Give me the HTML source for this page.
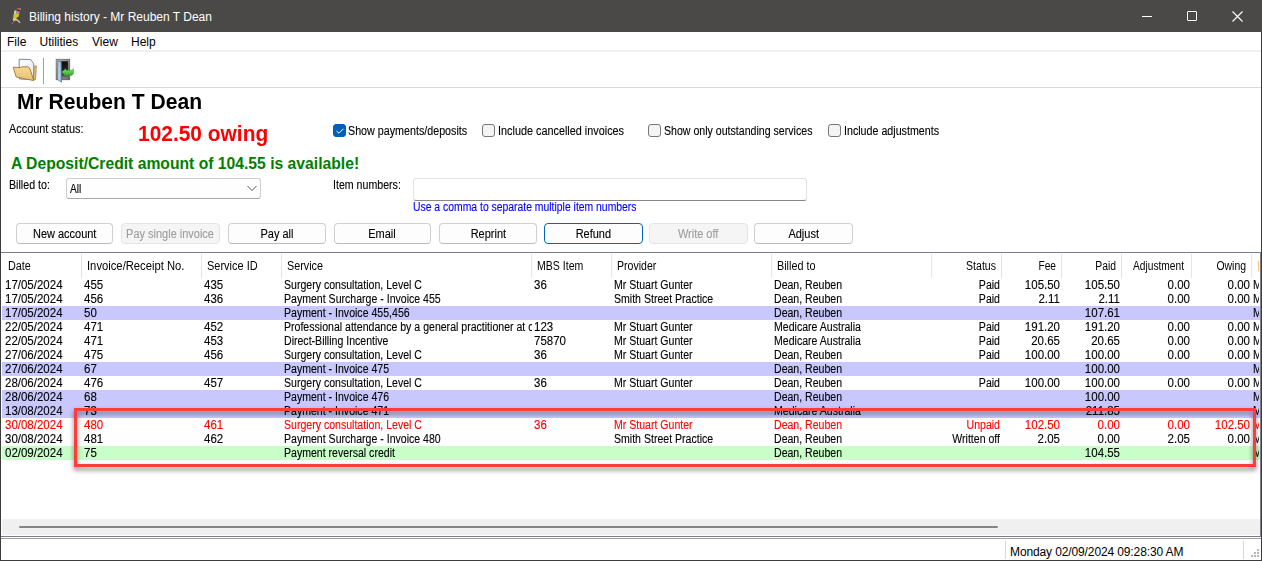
<!DOCTYPE html>
<html><head><meta charset="utf-8">
<style>
*{box-sizing:border-box;margin:0;padding:0}
html,body{width:1262px;height:561px;overflow:hidden;background:#fff;font-family:"Liberation Sans",sans-serif;color:#000}
.a{position:absolute;white-space:nowrap}
#win{position:absolute;left:0;top:0;width:1262px;height:561px;background:#fff;border-left:1px solid #3d3d3d;border-right:1px solid #3d3d3d;border-bottom:1px solid #3d3d3d}
#title{position:absolute;left:0;top:0;width:1262px;height:32px;background:#4b4947}
.t12{font-size:12px;line-height:12px}
.t11{font-size:11px;line-height:11px}
.btn{position:absolute;height:21px;border:1px solid #d0d0d0;border-bottom-color:#bdbdbd;border-radius:4px;background:#fdfdfd;font-size:12px;line-height:20px;text-align:center;white-space:nowrap}
.btn span{display:inline-block;transform:scaleX(0.915);-webkit-text-stroke:0.12px currentColor}
.ms{font-size:12px;line-height:12px;transform-origin:0 0;-webkit-text-stroke:0.12px currentColor}
.btn.dis{background:#f5f5f5;border-color:#e5e5e5;color:#9d9d9d}
.btn.def{border:1.5px solid #0067c0;line-height:20.5px}
.cb{position:absolute;top:124px;width:13px;height:13px;border:1px solid #777;border-radius:3px;background:#f4f4f4}
.cb.on{background:#005fb8;border-color:#005fb8}
.hsep{position:absolute;top:254px;width:1px;height:24px;background:#e5e5e5}
.row{position:absolute;left:2px;width:1258px;height:14px}
.c{position:absolute;font-size:11px;line-height:11px;white-space:nowrap;}
.r{text-align:right}
</style></head><body>
<div id="win">
</div>
<div id="title">
  <!-- bird icon -->
  <svg class="a" style="left:8px;top:5px;filter:blur(0.35px)" width="18" height="22" viewBox="0 0 18 22">
    <path d="M6.2 6 C6.8 5.2 7.8 5 8.3 5.6 L8.4 9 L6.6 10.6 L5.9 8.8 Z" fill="#c5d2b5"/>
    <path d="M8.2 5.8 L11.6 6.2 L11.4 8.5 L8.4 8.7 Z" fill="#a98ac6"/>
    <path d="M5.4 9.6 L8.4 8.5 L11.2 8.5 L10.6 11.4 L7.8 13.4 L5.2 13.4 Z" fill="#d8c01e"/>
    <path d="M5.2 13 L7.8 13.1 L10.8 15.6 L12.6 17.6 L11.8 18.2 L8.6 15.6 L6.6 15.8 L4.6 18.2 L3.6 18.4 Z" fill="#d3c69a"/>
    <path d="M4.3 15.6 L5.6 15.4 L5.1 17.3 L3.9 17.8 Z" fill="#1a1412"/>
    <ellipse cx="10.4" cy="4.1" rx="1.6" ry="1.35" fill="#e4461e"/>
    <rect x="9.7" y="5.1" width="1.4" height="1" fill="#1a1010"/>
    <rect x="12" y="3.6" width="1" height="0.9" fill="#dcdcd0"/>
  </svg>
  <div class="a t12" style="left:29px;top:10.8px;color:#fff">Billing history - Mr Reuben T Dean</div>
  <div class="a" style="left:1142px;top:16px;width:10px;height:1px;background:#fff"></div>
  <div class="a" style="left:1187px;top:11px;width:10px;height:10px;border:1px solid #fff;border-radius:1px"></div>
  <svg class="a" style="left:1232px;top:11px" width="11" height="11" viewBox="0 0 11 11"><path d="M0.5 0.5 L10.5 10.5 M10.5 0.5 L0.5 10.5" stroke="#fff" stroke-width="1.1"/></svg>
</div>
<!-- menu -->
<div class="a t12" style="left:7px;top:35.8px">File</div>
<div class="a t12" style="left:39.5px;top:35.8px">Utilities</div>
<div class="a t12" style="left:92px;top:35.8px">View</div>
<div class="a t12" style="left:131px;top:35.8px">Help</div>
<div class="a" style="left:1px;top:50px;width:1260px;height:2px;background:#f0f0f0"></div>
<!-- toolbar icons -->
<svg class="a" style="left:12px;top:58px" width="26" height="26" viewBox="0 0 26 26">
  <defs>
    <linearGradient id="fg" x1="0" y1="0" x2="0" y2="1"><stop offset="0" stop-color="#f6d894"/><stop offset="1" stop-color="#e9c170"/></linearGradient>
    <linearGradient id="pg" x1="0" y1="0" x2="1" y2="1"><stop offset="0" stop-color="#ffffff"/><stop offset="1" stop-color="#e2e9f0"/></linearGradient>
  </defs>
  <path d="M21.8 8.2 L24.4 7.9 L23.6 21.5 L21.5 21.8 Z" fill="#e6c070" stroke="#9b7535" stroke-width="0.7"/>
  <path d="M7.1 1.3 L18.6 1.5 L21.8 5.8 L21.6 21.5 L7.5 21 Z" fill="url(#pg)" stroke="#6d7d8c" stroke-width="0.9"/>
  <path d="M1.2 9.2 L8.5 9.6 L10 8.8 L15.6 8.8 Q17.2 9 18 11 L21.8 22.6 L4.2 19 Z" fill="url(#fg)" stroke="#9b7535" stroke-width="0.9" stroke-linejoin="round"/>
</svg>
<svg class="a" style="left:55px;top:58px" width="20" height="26" viewBox="0 0 20 26">
  <defs>
    <linearGradient id="dg" x1="0" y1="0" x2="1" y2="1"><stop offset="0" stop-color="#b8b8b8"/><stop offset="1" stop-color="#5a5a5a"/></linearGradient>
    <linearGradient id="og" x1="0" y1="0" x2="0" y2="1"><stop offset="0" stop-color="#0c0c0c"/><stop offset="0.7" stop-color="#2a2a2a"/><stop offset="1" stop-color="#8a8a8a"/></linearGradient>
    <linearGradient id="bg2" x1="0" y1="0" x2="1" y2="0"><stop offset="0" stop-color="#d4e6f4"/><stop offset="1" stop-color="#8fb4d6"/></linearGradient>
    <linearGradient id="ag" x1="0" y1="0" x2="0" y2="1"><stop offset="0" stop-color="#7ee86a"/><stop offset="1" stop-color="#22a01e"/></linearGradient>
  </defs>
  <rect x="1.1" y="1.2" width="13.7" height="20.6" fill="url(#dg)" stroke="#555" stroke-width="0.6"/>
  <rect x="6.2" y="3.3" width="6.7" height="17.2" fill="url(#og)"/>
  <path d="M3 2.8 L6.2 4 L6.5 24.2 L2.5 21.5 Z" fill="url(#bg2)" stroke="#4a6a8a" stroke-width="0.7"/>
  <path d="M6.5 14 L11 10.6 L11 12.3 L15.5 12.2 C17.3 12 18.2 11.2 18.5 10.4 L18.6 15 C18.2 16.8 16.8 17.6 15 17.6 L11 17.6 L11 18.8 Z" fill="url(#ag)" stroke="#2a8a25" stroke-width="0.4"/>
</svg>
<!-- toolbar -->
<div class="a" style="left:43px;top:58px;width:1px;height:26px;background:#a0a0a0"></div>
<div class="a" style="left:1px;top:87px;width:1260px;height:1px;background:#d9d9d9"></div>
<!-- heading -->
<div class="a" style="left:17px;top:91.4px;font-size:22px;line-height:22px;font-weight:bold;transform:scaleX(0.958);transform-origin:0 0">Mr Reuben T Dean</div>
<div class="a ms" style="left:9px;top:122.84px;transform:scaleX(0.907)">Account status:</div>
<div class="a" style="left:138px;top:123.8px;font-size:21.5px;line-height:21.5px;font-weight:bold;color:#ff0000;transform:scaleX(0.973);transform-origin:0 0">102.50 owing</div>
<div class="a" style="left:11px;top:155.7px;font-size:15.7px;line-height:15.7px;font-weight:bold;color:#008000">A Deposit/Credit amount of 104.55 is available!</div>
<!-- checkboxes -->
<div class="cb on" style="left:333px"><svg style="position:absolute;left:2px;top:3px" width="8" height="6" viewBox="0 0 8 6"><path d="M0.5 3 L3 5.2 L7.5 0.7" stroke="#fff" stroke-width="1" fill="none"/></svg></div>
<div class="a ms" style="left:348.3px;top:124.84px;transform:scaleX(0.893)">Show payments/deposits</div>
<div class="cb" style="left:482px"></div>
<div class="a ms" style="left:497.5px;top:124.84px;transform:scaleX(0.904)">Include cancelled invoices</div>
<div class="cb" style="left:648px"></div>
<div class="a ms" style="left:663.6px;top:124.84px;transform:scaleX(0.883)">Show only outstanding services</div>
<div class="cb" style="left:828px"></div>
<div class="a ms" style="left:844.2px;top:124.84px;transform:scaleX(0.89)">Include adjustments</div>
<!-- billed to -->
<div class="a ms" style="left:8.7px;top:179.1px;transform:scaleX(0.889)">Billed to:</div>
<div class="a" style="left:66px;top:178px;width:195px;height:21px;border:1px solid #cfcfcf;border-bottom-color:#a8a8a8;border-radius:3px;background:#fefefe"></div>
<div class="a ms" style="left:70.2px;top:182.9px;transform:scaleX(0.85)">All</div>
<svg class="a" style="left:247px;top:185px" width="10" height="7" viewBox="0 0 10 7"><path d="M0.5 1 L5 5.5 L9.5 1" stroke="#555" stroke-width="1" fill="none"/></svg>
<div class="a ms" style="left:332.6px;top:179.3px;transform:scaleX(0.885)">Item numbers:</div>
<div class="a" style="left:413px;top:178px;width:394px;height:23px;border:1px solid #e3e3e3;border-bottom:1px solid #868686;border-radius:3px;background:#fff"></div>
<div class="a ms" style="left:412.8px;top:200.8px;color:#0000ff;transform:scaleX(0.866)">Use a comma to separate multiple item numbers</div>
<!-- buttons -->
<div class="btn" style="left:16px;top:223px;width:97px"><span>New account</span></div>
<div class="btn dis" style="left:121px;top:223px;width:99px"><span>Pay single invoice</span></div>
<div class="btn" style="left:228px;top:223px;width:98px"><span>Pay all</span></div>
<div class="btn" style="left:334px;top:223px;width:97px"><span>Email</span></div>
<div class="btn" style="left:439px;top:223px;width:98px"><span>Reprint</span></div>
<div class="btn def" style="left:544px;top:223px;width:99px"><span>Refund</span></div>
<div class="btn dis" style="left:649px;top:223px;width:99px"><span>Write off</span></div>
<div class="btn" style="left:754px;top:223px;width:99px"><span>Adjust</span></div>
<!-- grid -->
<div class="a" style="left:1px;top:252px;width:1260px;height:285px;border-top:1px solid #7a7f8a;border-right:1px solid #7a7f8a;border-bottom:1px solid #7a7f8a"></div>
<div id="grid">
<div class="c" style="top:278.84px;font-size:12px;line-height:12px;-webkit-text-stroke:0.12px currentColor;left:4.8px;transform:scaleX(0.958);transform-origin:0 0;">17/05/2024</div>
<div class="c" style="top:278.84px;font-size:12px;line-height:12px;-webkit-text-stroke:0.12px currentColor;left:84px;transform:scaleX(0.958);transform-origin:0 0;">455</div>
<div class="c" style="top:278.84px;font-size:12px;line-height:12px;-webkit-text-stroke:0.12px currentColor;left:204px;transform:scaleX(0.958);transform-origin:0 0;">435</div>
<div class="a" style="left:0;top:0;width:532px;height:561px;overflow:hidden"><div class="c" style="top:278.84px;font-size:12px;line-height:12px;-webkit-text-stroke:0.12px currentColor;left:284px;transform:scaleX(0.88);transform-origin:0 0;">Surgery consultation, Level C</div></div>
<div class="c" style="top:278.84px;font-size:12px;line-height:12px;-webkit-text-stroke:0.12px currentColor;left:534px;transform:scaleX(0.958);transform-origin:0 0;">36</div>
<div class="c" style="top:278.84px;font-size:12px;line-height:12px;-webkit-text-stroke:0.12px currentColor;left:614px;transform:scaleX(0.88);transform-origin:0 0;">Mr Stuart Gunter</div>
<div class="c" style="top:278.84px;font-size:12px;line-height:12px;-webkit-text-stroke:0.12px currentColor;left:774px;transform:scaleX(0.88);transform-origin:0 0;">Dean, Reuben</div>
<div class="c" style="top:278.84px;font-size:12px;line-height:12px;-webkit-text-stroke:0.12px currentColor;left:700px;width:300px;text-align:right;transform:scaleX(0.88);transform-origin:100% 0;">Paid</div>
<div class="c" style="top:278.84px;font-size:12px;line-height:12px;-webkit-text-stroke:0.12px currentColor;left:760px;width:300px;text-align:right;transform:scaleX(0.958);transform-origin:100% 0;">105.50</div>
<div class="c" style="top:278.84px;font-size:12px;line-height:12px;-webkit-text-stroke:0.12px currentColor;left:820px;width:300px;text-align:right;transform:scaleX(0.958);transform-origin:100% 0;">105.50</div>
<div class="c" style="top:278.84px;font-size:12px;line-height:12px;-webkit-text-stroke:0.12px currentColor;left:890px;width:300px;text-align:right;transform:scaleX(0.958);transform-origin:100% 0;">0.00</div>
<div class="c" style="top:278.84px;font-size:12px;line-height:12px;-webkit-text-stroke:0.12px currentColor;left:950px;width:300px;text-align:right;transform:scaleX(0.958);transform-origin:100% 0;">0.00</div>
<div class="a" style="left:0;top:0;width:1259px;height:561px;overflow:hidden"><div class="c" style="top:278.84px;font-size:12px;line-height:12px;-webkit-text-stroke:0.12px currentColor;left:1253px;transform:scaleX(0.88);transform-origin:0 0;">M</div></div>
<div class="c" style="top:292.84px;font-size:12px;line-height:12px;-webkit-text-stroke:0.12px currentColor;left:4.8px;transform:scaleX(0.958);transform-origin:0 0;">17/05/2024</div>
<div class="c" style="top:292.84px;font-size:12px;line-height:12px;-webkit-text-stroke:0.12px currentColor;left:84px;transform:scaleX(0.958);transform-origin:0 0;">456</div>
<div class="c" style="top:292.84px;font-size:12px;line-height:12px;-webkit-text-stroke:0.12px currentColor;left:204px;transform:scaleX(0.958);transform-origin:0 0;">436</div>
<div class="a" style="left:0;top:0;width:532px;height:561px;overflow:hidden"><div class="c" style="top:292.84px;font-size:12px;line-height:12px;-webkit-text-stroke:0.12px currentColor;left:284px;transform:scaleX(0.88);transform-origin:0 0;">Payment Surcharge - Invoice 455</div></div>
<div class="c" style="top:292.84px;font-size:12px;line-height:12px;-webkit-text-stroke:0.12px currentColor;left:614px;transform:scaleX(0.88);transform-origin:0 0;">Smith Street Practice</div>
<div class="c" style="top:292.84px;font-size:12px;line-height:12px;-webkit-text-stroke:0.12px currentColor;left:774px;transform:scaleX(0.88);transform-origin:0 0;">Dean, Reuben</div>
<div class="c" style="top:292.84px;font-size:12px;line-height:12px;-webkit-text-stroke:0.12px currentColor;left:700px;width:300px;text-align:right;transform:scaleX(0.88);transform-origin:100% 0;">Paid</div>
<div class="c" style="top:292.84px;font-size:12px;line-height:12px;-webkit-text-stroke:0.12px currentColor;left:760px;width:300px;text-align:right;transform:scaleX(0.958);transform-origin:100% 0;">2.11</div>
<div class="c" style="top:292.84px;font-size:12px;line-height:12px;-webkit-text-stroke:0.12px currentColor;left:820px;width:300px;text-align:right;transform:scaleX(0.958);transform-origin:100% 0;">2.11</div>
<div class="c" style="top:292.84px;font-size:12px;line-height:12px;-webkit-text-stroke:0.12px currentColor;left:890px;width:300px;text-align:right;transform:scaleX(0.958);transform-origin:100% 0;">0.00</div>
<div class="c" style="top:292.84px;font-size:12px;line-height:12px;-webkit-text-stroke:0.12px currentColor;left:950px;width:300px;text-align:right;transform:scaleX(0.958);transform-origin:100% 0;">0.00</div>
<div class="a" style="left:0;top:0;width:1259px;height:561px;overflow:hidden"><div class="c" style="top:292.84px;font-size:12px;line-height:12px;-webkit-text-stroke:0.12px currentColor;left:1253px;transform:scaleX(0.88);transform-origin:0 0;">M</div></div>
<div class="a" style="left:2px;top:306px;width:1258px;height:14px;background:#c8c8ff"></div>
<div class="c" style="top:306.84px;font-size:12px;line-height:12px;-webkit-text-stroke:0.12px currentColor;left:4.8px;transform:scaleX(0.958);transform-origin:0 0;">17/05/2024</div>
<div class="c" style="top:306.84px;font-size:12px;line-height:12px;-webkit-text-stroke:0.12px currentColor;left:84px;transform:scaleX(0.958);transform-origin:0 0;">50</div>
<div class="a" style="left:0;top:0;width:532px;height:561px;overflow:hidden"><div class="c" style="top:306.84px;font-size:12px;line-height:12px;-webkit-text-stroke:0.12px currentColor;left:284px;transform:scaleX(0.88);transform-origin:0 0;">Payment - Invoice 455,456</div></div>
<div class="c" style="top:306.84px;font-size:12px;line-height:12px;-webkit-text-stroke:0.12px currentColor;left:774px;transform:scaleX(0.88);transform-origin:0 0;">Dean, Reuben</div>
<div class="c" style="top:306.84px;font-size:12px;line-height:12px;-webkit-text-stroke:0.12px currentColor;left:820px;width:300px;text-align:right;transform:scaleX(0.958);transform-origin:100% 0;">107.61</div>
<div class="a" style="left:0;top:0;width:1259px;height:561px;overflow:hidden"><div class="c" style="top:306.84px;font-size:12px;line-height:12px;-webkit-text-stroke:0.12px currentColor;left:1253px;transform:scaleX(0.88);transform-origin:0 0;">M</div></div>
<div class="c" style="top:320.84px;font-size:12px;line-height:12px;-webkit-text-stroke:0.12px currentColor;left:4.8px;transform:scaleX(0.958);transform-origin:0 0;">22/05/2024</div>
<div class="c" style="top:320.84px;font-size:12px;line-height:12px;-webkit-text-stroke:0.12px currentColor;left:84px;transform:scaleX(0.958);transform-origin:0 0;">471</div>
<div class="c" style="top:320.84px;font-size:12px;line-height:12px;-webkit-text-stroke:0.12px currentColor;left:204px;transform:scaleX(0.958);transform-origin:0 0;">452</div>
<div class="a" style="left:0;top:0;width:532px;height:561px;overflow:hidden"><div class="c" style="top:320.84px;font-size:12px;line-height:12px;-webkit-text-stroke:0.12px currentColor;left:284px;transform:scaleX(0.88);transform-origin:0 0;">Professional attendance by a general practitioner at consulting rooms</div></div>
<div class="c" style="top:320.84px;font-size:12px;line-height:12px;-webkit-text-stroke:0.12px currentColor;left:534px;transform:scaleX(0.958);transform-origin:0 0;">123</div>
<div class="c" style="top:320.84px;font-size:12px;line-height:12px;-webkit-text-stroke:0.12px currentColor;left:614px;transform:scaleX(0.88);transform-origin:0 0;">Mr Stuart Gunter</div>
<div class="c" style="top:320.84px;font-size:12px;line-height:12px;-webkit-text-stroke:0.12px currentColor;left:774px;transform:scaleX(0.88);transform-origin:0 0;">Medicare Australia</div>
<div class="c" style="top:320.84px;font-size:12px;line-height:12px;-webkit-text-stroke:0.12px currentColor;left:700px;width:300px;text-align:right;transform:scaleX(0.88);transform-origin:100% 0;">Paid</div>
<div class="c" style="top:320.84px;font-size:12px;line-height:12px;-webkit-text-stroke:0.12px currentColor;left:760px;width:300px;text-align:right;transform:scaleX(0.958);transform-origin:100% 0;">191.20</div>
<div class="c" style="top:320.84px;font-size:12px;line-height:12px;-webkit-text-stroke:0.12px currentColor;left:820px;width:300px;text-align:right;transform:scaleX(0.958);transform-origin:100% 0;">191.20</div>
<div class="c" style="top:320.84px;font-size:12px;line-height:12px;-webkit-text-stroke:0.12px currentColor;left:890px;width:300px;text-align:right;transform:scaleX(0.958);transform-origin:100% 0;">0.00</div>
<div class="c" style="top:320.84px;font-size:12px;line-height:12px;-webkit-text-stroke:0.12px currentColor;left:950px;width:300px;text-align:right;transform:scaleX(0.958);transform-origin:100% 0;">0.00</div>
<div class="a" style="left:0;top:0;width:1259px;height:561px;overflow:hidden"><div class="c" style="top:320.84px;font-size:12px;line-height:12px;-webkit-text-stroke:0.12px currentColor;left:1253px;transform:scaleX(0.88);transform-origin:0 0;">M</div></div>
<div class="c" style="top:334.84px;font-size:12px;line-height:12px;-webkit-text-stroke:0.12px currentColor;left:4.8px;transform:scaleX(0.958);transform-origin:0 0;">22/05/2024</div>
<div class="c" style="top:334.84px;font-size:12px;line-height:12px;-webkit-text-stroke:0.12px currentColor;left:84px;transform:scaleX(0.958);transform-origin:0 0;">471</div>
<div class="c" style="top:334.84px;font-size:12px;line-height:12px;-webkit-text-stroke:0.12px currentColor;left:204px;transform:scaleX(0.958);transform-origin:0 0;">453</div>
<div class="a" style="left:0;top:0;width:532px;height:561px;overflow:hidden"><div class="c" style="top:334.84px;font-size:12px;line-height:12px;-webkit-text-stroke:0.12px currentColor;left:284px;transform:scaleX(0.88);transform-origin:0 0;">Direct-Billing Incentive</div></div>
<div class="c" style="top:334.84px;font-size:12px;line-height:12px;-webkit-text-stroke:0.12px currentColor;left:534px;transform:scaleX(0.958);transform-origin:0 0;">75870</div>
<div class="c" style="top:334.84px;font-size:12px;line-height:12px;-webkit-text-stroke:0.12px currentColor;left:614px;transform:scaleX(0.88);transform-origin:0 0;">Mr Stuart Gunter</div>
<div class="c" style="top:334.84px;font-size:12px;line-height:12px;-webkit-text-stroke:0.12px currentColor;left:774px;transform:scaleX(0.88);transform-origin:0 0;">Medicare Australia</div>
<div class="c" style="top:334.84px;font-size:12px;line-height:12px;-webkit-text-stroke:0.12px currentColor;left:700px;width:300px;text-align:right;transform:scaleX(0.88);transform-origin:100% 0;">Paid</div>
<div class="c" style="top:334.84px;font-size:12px;line-height:12px;-webkit-text-stroke:0.12px currentColor;left:760px;width:300px;text-align:right;transform:scaleX(0.958);transform-origin:100% 0;">20.65</div>
<div class="c" style="top:334.84px;font-size:12px;line-height:12px;-webkit-text-stroke:0.12px currentColor;left:820px;width:300px;text-align:right;transform:scaleX(0.958);transform-origin:100% 0;">20.65</div>
<div class="c" style="top:334.84px;font-size:12px;line-height:12px;-webkit-text-stroke:0.12px currentColor;left:890px;width:300px;text-align:right;transform:scaleX(0.958);transform-origin:100% 0;">0.00</div>
<div class="c" style="top:334.84px;font-size:12px;line-height:12px;-webkit-text-stroke:0.12px currentColor;left:950px;width:300px;text-align:right;transform:scaleX(0.958);transform-origin:100% 0;">0.00</div>
<div class="a" style="left:0;top:0;width:1259px;height:561px;overflow:hidden"><div class="c" style="top:334.84px;font-size:12px;line-height:12px;-webkit-text-stroke:0.12px currentColor;left:1253px;transform:scaleX(0.88);transform-origin:0 0;">M</div></div>
<div class="c" style="top:348.84px;font-size:12px;line-height:12px;-webkit-text-stroke:0.12px currentColor;left:4.8px;transform:scaleX(0.958);transform-origin:0 0;">27/06/2024</div>
<div class="c" style="top:348.84px;font-size:12px;line-height:12px;-webkit-text-stroke:0.12px currentColor;left:84px;transform:scaleX(0.958);transform-origin:0 0;">475</div>
<div class="c" style="top:348.84px;font-size:12px;line-height:12px;-webkit-text-stroke:0.12px currentColor;left:204px;transform:scaleX(0.958);transform-origin:0 0;">456</div>
<div class="a" style="left:0;top:0;width:532px;height:561px;overflow:hidden"><div class="c" style="top:348.84px;font-size:12px;line-height:12px;-webkit-text-stroke:0.12px currentColor;left:284px;transform:scaleX(0.88);transform-origin:0 0;">Surgery consultation, Level C</div></div>
<div class="c" style="top:348.84px;font-size:12px;line-height:12px;-webkit-text-stroke:0.12px currentColor;left:534px;transform:scaleX(0.958);transform-origin:0 0;">36</div>
<div class="c" style="top:348.84px;font-size:12px;line-height:12px;-webkit-text-stroke:0.12px currentColor;left:614px;transform:scaleX(0.88);transform-origin:0 0;">Mr Stuart Gunter</div>
<div class="c" style="top:348.84px;font-size:12px;line-height:12px;-webkit-text-stroke:0.12px currentColor;left:774px;transform:scaleX(0.88);transform-origin:0 0;">Dean, Reuben</div>
<div class="c" style="top:348.84px;font-size:12px;line-height:12px;-webkit-text-stroke:0.12px currentColor;left:700px;width:300px;text-align:right;transform:scaleX(0.88);transform-origin:100% 0;">Paid</div>
<div class="c" style="top:348.84px;font-size:12px;line-height:12px;-webkit-text-stroke:0.12px currentColor;left:760px;width:300px;text-align:right;transform:scaleX(0.958);transform-origin:100% 0;">100.00</div>
<div class="c" style="top:348.84px;font-size:12px;line-height:12px;-webkit-text-stroke:0.12px currentColor;left:820px;width:300px;text-align:right;transform:scaleX(0.958);transform-origin:100% 0;">100.00</div>
<div class="c" style="top:348.84px;font-size:12px;line-height:12px;-webkit-text-stroke:0.12px currentColor;left:890px;width:300px;text-align:right;transform:scaleX(0.958);transform-origin:100% 0;">0.00</div>
<div class="c" style="top:348.84px;font-size:12px;line-height:12px;-webkit-text-stroke:0.12px currentColor;left:950px;width:300px;text-align:right;transform:scaleX(0.958);transform-origin:100% 0;">0.00</div>
<div class="a" style="left:0;top:0;width:1259px;height:561px;overflow:hidden"><div class="c" style="top:348.84px;font-size:12px;line-height:12px;-webkit-text-stroke:0.12px currentColor;left:1253px;transform:scaleX(0.88);transform-origin:0 0;">M</div></div>
<div class="a" style="left:2px;top:362px;width:1258px;height:14px;background:#c8c8ff"></div>
<div class="c" style="top:362.84px;font-size:12px;line-height:12px;-webkit-text-stroke:0.12px currentColor;left:4.8px;transform:scaleX(0.958);transform-origin:0 0;">27/06/2024</div>
<div class="c" style="top:362.84px;font-size:12px;line-height:12px;-webkit-text-stroke:0.12px currentColor;left:84px;transform:scaleX(0.958);transform-origin:0 0;">67</div>
<div class="a" style="left:0;top:0;width:532px;height:561px;overflow:hidden"><div class="c" style="top:362.84px;font-size:12px;line-height:12px;-webkit-text-stroke:0.12px currentColor;left:284px;transform:scaleX(0.88);transform-origin:0 0;">Payment - Invoice 475</div></div>
<div class="c" style="top:362.84px;font-size:12px;line-height:12px;-webkit-text-stroke:0.12px currentColor;left:774px;transform:scaleX(0.88);transform-origin:0 0;">Dean, Reuben</div>
<div class="c" style="top:362.84px;font-size:12px;line-height:12px;-webkit-text-stroke:0.12px currentColor;left:820px;width:300px;text-align:right;transform:scaleX(0.958);transform-origin:100% 0;">100.00</div>
<div class="a" style="left:0;top:0;width:1259px;height:561px;overflow:hidden"><div class="c" style="top:362.84px;font-size:12px;line-height:12px;-webkit-text-stroke:0.12px currentColor;left:1253px;transform:scaleX(0.88);transform-origin:0 0;">M</div></div>
<div class="c" style="top:376.84px;font-size:12px;line-height:12px;-webkit-text-stroke:0.12px currentColor;left:4.8px;transform:scaleX(0.958);transform-origin:0 0;">28/06/2024</div>
<div class="c" style="top:376.84px;font-size:12px;line-height:12px;-webkit-text-stroke:0.12px currentColor;left:84px;transform:scaleX(0.958);transform-origin:0 0;">476</div>
<div class="c" style="top:376.84px;font-size:12px;line-height:12px;-webkit-text-stroke:0.12px currentColor;left:204px;transform:scaleX(0.958);transform-origin:0 0;">457</div>
<div class="a" style="left:0;top:0;width:532px;height:561px;overflow:hidden"><div class="c" style="top:376.84px;font-size:12px;line-height:12px;-webkit-text-stroke:0.12px currentColor;left:284px;transform:scaleX(0.88);transform-origin:0 0;">Surgery consultation, Level C</div></div>
<div class="c" style="top:376.84px;font-size:12px;line-height:12px;-webkit-text-stroke:0.12px currentColor;left:534px;transform:scaleX(0.958);transform-origin:0 0;">36</div>
<div class="c" style="top:376.84px;font-size:12px;line-height:12px;-webkit-text-stroke:0.12px currentColor;left:614px;transform:scaleX(0.88);transform-origin:0 0;">Mr Stuart Gunter</div>
<div class="c" style="top:376.84px;font-size:12px;line-height:12px;-webkit-text-stroke:0.12px currentColor;left:774px;transform:scaleX(0.88);transform-origin:0 0;">Dean, Reuben</div>
<div class="c" style="top:376.84px;font-size:12px;line-height:12px;-webkit-text-stroke:0.12px currentColor;left:700px;width:300px;text-align:right;transform:scaleX(0.88);transform-origin:100% 0;">Paid</div>
<div class="c" style="top:376.84px;font-size:12px;line-height:12px;-webkit-text-stroke:0.12px currentColor;left:760px;width:300px;text-align:right;transform:scaleX(0.958);transform-origin:100% 0;">100.00</div>
<div class="c" style="top:376.84px;font-size:12px;line-height:12px;-webkit-text-stroke:0.12px currentColor;left:820px;width:300px;text-align:right;transform:scaleX(0.958);transform-origin:100% 0;">100.00</div>
<div class="c" style="top:376.84px;font-size:12px;line-height:12px;-webkit-text-stroke:0.12px currentColor;left:890px;width:300px;text-align:right;transform:scaleX(0.958);transform-origin:100% 0;">0.00</div>
<div class="c" style="top:376.84px;font-size:12px;line-height:12px;-webkit-text-stroke:0.12px currentColor;left:950px;width:300px;text-align:right;transform:scaleX(0.958);transform-origin:100% 0;">0.00</div>
<div class="a" style="left:0;top:0;width:1259px;height:561px;overflow:hidden"><div class="c" style="top:376.84px;font-size:12px;line-height:12px;-webkit-text-stroke:0.12px currentColor;left:1253px;transform:scaleX(0.88);transform-origin:0 0;">M</div></div>
<div class="a" style="left:2px;top:390px;width:1258px;height:14px;background:#c8c8ff"></div>
<div class="c" style="top:390.84px;font-size:12px;line-height:12px;-webkit-text-stroke:0.12px currentColor;left:4.8px;transform:scaleX(0.958);transform-origin:0 0;">28/06/2024</div>
<div class="c" style="top:390.84px;font-size:12px;line-height:12px;-webkit-text-stroke:0.12px currentColor;left:84px;transform:scaleX(0.958);transform-origin:0 0;">68</div>
<div class="a" style="left:0;top:0;width:532px;height:561px;overflow:hidden"><div class="c" style="top:390.84px;font-size:12px;line-height:12px;-webkit-text-stroke:0.12px currentColor;left:284px;transform:scaleX(0.88);transform-origin:0 0;">Payment - Invoice 476</div></div>
<div class="c" style="top:390.84px;font-size:12px;line-height:12px;-webkit-text-stroke:0.12px currentColor;left:774px;transform:scaleX(0.88);transform-origin:0 0;">Dean, Reuben</div>
<div class="c" style="top:390.84px;font-size:12px;line-height:12px;-webkit-text-stroke:0.12px currentColor;left:820px;width:300px;text-align:right;transform:scaleX(0.958);transform-origin:100% 0;">100.00</div>
<div class="a" style="left:0;top:0;width:1259px;height:561px;overflow:hidden"><div class="c" style="top:390.84px;font-size:12px;line-height:12px;-webkit-text-stroke:0.12px currentColor;left:1253px;transform:scaleX(0.88);transform-origin:0 0;">M</div></div>
<div class="a" style="left:2px;top:404px;width:1258px;height:14px;background:#c8c8ff"></div>
<div class="c" style="top:404.84px;font-size:12px;line-height:12px;-webkit-text-stroke:0.12px currentColor;left:4.8px;transform:scaleX(0.958);transform-origin:0 0;">13/08/2024</div>
<div class="c" style="top:404.84px;font-size:12px;line-height:12px;-webkit-text-stroke:0.12px currentColor;left:84px;transform:scaleX(0.958);transform-origin:0 0;">73</div>
<div class="a" style="left:0;top:0;width:532px;height:561px;overflow:hidden"><div class="c" style="top:404.84px;font-size:12px;line-height:12px;-webkit-text-stroke:0.12px currentColor;left:284px;transform:scaleX(0.88);transform-origin:0 0;">Payment - Invoice 471</div></div>
<div class="c" style="top:404.84px;font-size:12px;line-height:12px;-webkit-text-stroke:0.12px currentColor;left:774px;transform:scaleX(0.88);transform-origin:0 0;">Medicare Australia</div>
<div class="c" style="top:404.84px;font-size:12px;line-height:12px;-webkit-text-stroke:0.12px currentColor;left:820px;width:300px;text-align:right;transform:scaleX(0.958);transform-origin:100% 0;">211.85</div>
<div class="a" style="left:0;top:0;width:1259px;height:561px;overflow:hidden"><div class="c" style="top:404.84px;font-size:12px;line-height:12px;-webkit-text-stroke:0.12px currentColor;left:1253px;transform:scaleX(0.88);transform-origin:0 0;">M</div></div>
<div class="c" style="top:418.84px;font-size:12px;line-height:12px;-webkit-text-stroke:0.12px currentColor;color:#ff0000;left:4.8px;transform:scaleX(0.958);transform-origin:0 0;">30/08/2024</div>
<div class="c" style="top:418.84px;font-size:12px;line-height:12px;-webkit-text-stroke:0.12px currentColor;color:#ff0000;left:84px;transform:scaleX(0.958);transform-origin:0 0;">480</div>
<div class="c" style="top:418.84px;font-size:12px;line-height:12px;-webkit-text-stroke:0.12px currentColor;color:#ff0000;left:204px;transform:scaleX(0.958);transform-origin:0 0;">461</div>
<div class="a" style="left:0;top:0;width:532px;height:561px;overflow:hidden"><div class="c" style="top:418.84px;font-size:12px;line-height:12px;-webkit-text-stroke:0.12px currentColor;color:#ff0000;left:284px;transform:scaleX(0.88);transform-origin:0 0;">Surgery consultation, Level C</div></div>
<div class="c" style="top:418.84px;font-size:12px;line-height:12px;-webkit-text-stroke:0.12px currentColor;color:#ff0000;left:534px;transform:scaleX(0.958);transform-origin:0 0;">36</div>
<div class="c" style="top:418.84px;font-size:12px;line-height:12px;-webkit-text-stroke:0.12px currentColor;color:#ff0000;left:614px;transform:scaleX(0.88);transform-origin:0 0;">Mr Stuart Gunter</div>
<div class="c" style="top:418.84px;font-size:12px;line-height:12px;-webkit-text-stroke:0.12px currentColor;color:#ff0000;left:774px;transform:scaleX(0.88);transform-origin:0 0;">Dean, Reuben</div>
<div class="c" style="top:418.84px;font-size:12px;line-height:12px;-webkit-text-stroke:0.12px currentColor;color:#ff0000;left:700px;width:300px;text-align:right;transform:scaleX(0.88);transform-origin:100% 0;">Unpaid</div>
<div class="c" style="top:418.84px;font-size:12px;line-height:12px;-webkit-text-stroke:0.12px currentColor;color:#ff0000;left:760px;width:300px;text-align:right;transform:scaleX(0.958);transform-origin:100% 0;">102.50</div>
<div class="c" style="top:418.84px;font-size:12px;line-height:12px;-webkit-text-stroke:0.12px currentColor;color:#ff0000;left:820px;width:300px;text-align:right;transform:scaleX(0.958);transform-origin:100% 0;">0.00</div>
<div class="c" style="top:418.84px;font-size:12px;line-height:12px;-webkit-text-stroke:0.12px currentColor;color:#ff0000;left:890px;width:300px;text-align:right;transform:scaleX(0.958);transform-origin:100% 0;">0.00</div>
<div class="c" style="top:418.84px;font-size:12px;line-height:12px;-webkit-text-stroke:0.12px currentColor;color:#ff0000;left:950px;width:300px;text-align:right;transform:scaleX(0.958);transform-origin:100% 0;">102.50</div>
<div class="a" style="left:0;top:0;width:1259px;height:561px;overflow:hidden"><div class="c" style="top:418.84px;font-size:12px;line-height:12px;-webkit-text-stroke:0.12px currentColor;color:#ff0000;left:1253px;transform:scaleX(0.88);transform-origin:0 0;">M</div></div>
<div class="c" style="top:432.84px;font-size:12px;line-height:12px;-webkit-text-stroke:0.12px currentColor;left:4.8px;transform:scaleX(0.958);transform-origin:0 0;">30/08/2024</div>
<div class="c" style="top:432.84px;font-size:12px;line-height:12px;-webkit-text-stroke:0.12px currentColor;left:84px;transform:scaleX(0.958);transform-origin:0 0;">481</div>
<div class="c" style="top:432.84px;font-size:12px;line-height:12px;-webkit-text-stroke:0.12px currentColor;left:204px;transform:scaleX(0.958);transform-origin:0 0;">462</div>
<div class="a" style="left:0;top:0;width:532px;height:561px;overflow:hidden"><div class="c" style="top:432.84px;font-size:12px;line-height:12px;-webkit-text-stroke:0.12px currentColor;left:284px;transform:scaleX(0.88);transform-origin:0 0;">Payment Surcharge - Invoice 480</div></div>
<div class="c" style="top:432.84px;font-size:12px;line-height:12px;-webkit-text-stroke:0.12px currentColor;left:614px;transform:scaleX(0.88);transform-origin:0 0;">Smith Street Practice</div>
<div class="c" style="top:432.84px;font-size:12px;line-height:12px;-webkit-text-stroke:0.12px currentColor;left:774px;transform:scaleX(0.88);transform-origin:0 0;">Dean, Reuben</div>
<div class="c" style="top:432.84px;font-size:12px;line-height:12px;-webkit-text-stroke:0.12px currentColor;left:700px;width:300px;text-align:right;transform:scaleX(0.88);transform-origin:100% 0;">Written off</div>
<div class="c" style="top:432.84px;font-size:12px;line-height:12px;-webkit-text-stroke:0.12px currentColor;left:760px;width:300px;text-align:right;transform:scaleX(0.958);transform-origin:100% 0;">2.05</div>
<div class="c" style="top:432.84px;font-size:12px;line-height:12px;-webkit-text-stroke:0.12px currentColor;left:820px;width:300px;text-align:right;transform:scaleX(0.958);transform-origin:100% 0;">0.00</div>
<div class="c" style="top:432.84px;font-size:12px;line-height:12px;-webkit-text-stroke:0.12px currentColor;left:890px;width:300px;text-align:right;transform:scaleX(0.958);transform-origin:100% 0;">2.05</div>
<div class="c" style="top:432.84px;font-size:12px;line-height:12px;-webkit-text-stroke:0.12px currentColor;left:950px;width:300px;text-align:right;transform:scaleX(0.958);transform-origin:100% 0;">0.00</div>
<div class="a" style="left:0;top:0;width:1259px;height:561px;overflow:hidden"><div class="c" style="top:432.84px;font-size:12px;line-height:12px;-webkit-text-stroke:0.12px currentColor;left:1253px;transform:scaleX(0.88);transform-origin:0 0;">M</div></div>
<div class="a" style="left:2px;top:446px;width:1258px;height:14px;background:#c8ffc8"></div>
<div class="c" style="top:446.84px;font-size:12px;line-height:12px;-webkit-text-stroke:0.12px currentColor;left:4.8px;transform:scaleX(0.958);transform-origin:0 0;">02/09/2024</div>
<div class="c" style="top:446.84px;font-size:12px;line-height:12px;-webkit-text-stroke:0.12px currentColor;left:84px;transform:scaleX(0.958);transform-origin:0 0;">75</div>
<div class="a" style="left:0;top:0;width:532px;height:561px;overflow:hidden"><div class="c" style="top:446.84px;font-size:12px;line-height:12px;-webkit-text-stroke:0.12px currentColor;left:284px;transform:scaleX(0.88);transform-origin:0 0;">Payment reversal credit</div></div>
<div class="c" style="top:446.84px;font-size:12px;line-height:12px;-webkit-text-stroke:0.12px currentColor;left:774px;transform:scaleX(0.88);transform-origin:0 0;">Dean, Reuben</div>
<div class="c" style="top:446.84px;font-size:12px;line-height:12px;-webkit-text-stroke:0.12px currentColor;left:820px;width:300px;text-align:right;transform:scaleX(0.958);transform-origin:100% 0;">104.55</div>
<div class="a" style="left:0;top:0;width:1259px;height:561px;overflow:hidden"><div class="c" style="top:446.84px;font-size:12px;line-height:12px;-webkit-text-stroke:0.12px currentColor;left:1253px;transform:scaleX(0.88);transform-origin:0 0;">M</div></div>
<div class="hsep" style="left:81px"></div>
<div class="hsep" style="left:201px"></div>
<div class="hsep" style="left:281px"></div>
<div class="hsep" style="left:531px"></div>
<div class="hsep" style="left:611px"></div>
<div class="hsep" style="left:771px"></div>
<div class="hsep" style="left:931px"></div>
<div class="hsep" style="left:1001px"></div>
<div class="hsep" style="left:1061px"></div>
<div class="hsep" style="left:1121px"></div>
<div class="hsep" style="left:1191px"></div>
<div class="hsep" style="left:1251px"></div>
<div class="c" style="top:260.14px;font-size:12px;line-height:12px;left:7.7px;transform:scaleX(0.9);transform-origin:0 0;">Date</div>
<div class="c" style="top:260.14px;font-size:12px;line-height:12px;left:87.3px;transform:scaleX(0.937);transform-origin:0 0;">Invoice/Receipt No.</div>
<div class="c" style="top:260.14px;font-size:12px;line-height:12px;left:207px;transform:scaleX(0.915);transform-origin:0 0;">Service ID</div>
<div class="c" style="top:260.14px;font-size:12px;line-height:12px;left:286.9px;transform:scaleX(0.9);transform-origin:0 0;">Service</div>
<div class="c" style="top:260.14px;font-size:12px;line-height:12px;left:537.3px;transform:scaleX(0.88);transform-origin:0 0;">MBS Item</div>
<div class="c" style="top:260.14px;font-size:12px;line-height:12px;left:617.2px;transform:scaleX(0.88);transform-origin:0 0;">Provider</div>
<div class="c" style="top:260.14px;font-size:12px;line-height:12px;left:777.2px;transform:scaleX(0.9);transform-origin:0 0;">Billed to</div>
<div class="c" style="top:260.14px;font-size:12px;line-height:12px;left:846px;width:150px;text-align:right;transform:scaleX(0.879);transform-origin:100% 0;">Status</div>
<div class="c" style="top:260.14px;font-size:12px;line-height:12px;left:905.7px;width:150px;text-align:right;transform:scaleX(0.85);transform-origin:100% 0;">Fee</div>
<div class="c" style="top:260.14px;font-size:12px;line-height:12px;left:965.7px;width:150px;text-align:right;transform:scaleX(0.865);transform-origin:100% 0;">Paid</div>
<div class="c" style="top:260.14px;font-size:12px;line-height:12px;left:1133.2px;transform:scaleX(0.85);transform-origin:0 0;">Adjustment</div>
<div class="c" style="top:260.14px;font-size:12px;line-height:12px;left:1095.8px;width:150px;text-align:right;transform:scaleX(0.87);transform-origin:100% 0;">Owing</div>
</div><!--/grid-->
<div class="a" style="left:1258px;top:261px;width:1px;height:10px;background:#f6c878"></div>
<!-- annotation -->
<div class="a" style="left:74px;top:408px;width:1182px;height:59px;border:3px solid #fd3c3c;filter:drop-shadow(0.5px 3.5px 2.5px rgba(0,0,0,0.52))"></div>
<!-- scrollbar -->
<div class="a" style="left:2px;top:519px;width:1258px;height:16px;background:#f0f0f0"></div>
<div class="a" style="left:19px;top:526px;width:979px;height:2px;background:#858585;border-radius:1px"></div>
<!-- status bar -->
<div class="a" style="left:1px;top:538px;width:1260px;height:1px;background:#a0a0a0"></div>
<div class="a" style="left:1005px;top:541px;width:1px;height:18px;background:#d8d8d8"></div>
<div class="a t12" style="left:1010px;top:545.8px;letter-spacing:-0.12px">Monday 02/09/2024 09:28:30 AM</div>
<div class="a" style="left:1243px;top:541px;width:1px;height:18px;background:#d8d8d8"></div>
<svg class="a" style="left:1249px;top:548px" width="11" height="11" viewBox="0 0 11 11"><g fill="#b5b5b5"><rect x="8" y="1" width="2" height="2"/><rect x="5" y="4" width="2" height="2"/><rect x="8" y="4" width="2" height="2"/><rect x="2" y="7" width="2" height="2"/><rect x="5" y="7" width="2" height="2"/><rect x="8" y="7" width="2" height="2"/></g></svg>
</body></html>
